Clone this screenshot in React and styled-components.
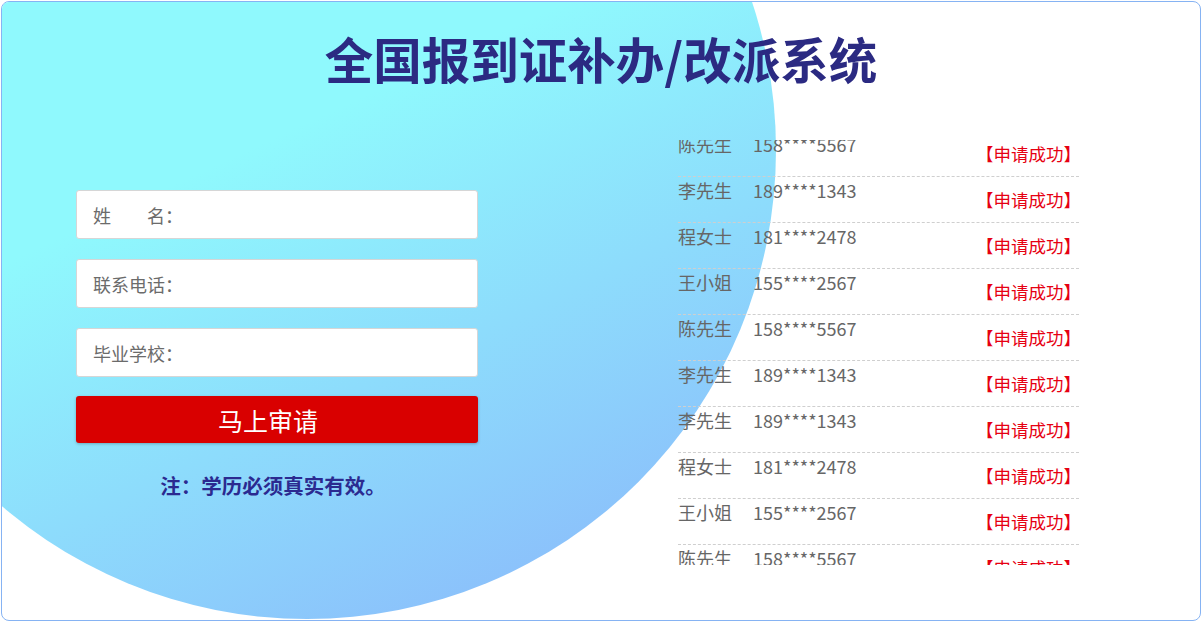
import React from "react";
import styled, { createGlobalStyle } from "styled-components";

const GlobalStyle = createGlobalStyle`
  html, body { margin: 0; padding: 0; background: #fff; }
  body { font-family: "Noto Sans CJK SC", "Noto Sans", sans-serif; }
  * { box-sizing: border-box; }
`;

const Page = styled.div`
  padding: 1px;
`;

const Panel = styled.div`
  position: relative;
  width: 1200px;
  height: 620px;
  border: 1px solid #86b3f3;
  border-radius: 8px;
  overflow: hidden;
  background: #fff;
`;

const Circle = styled.div`
  position: absolute;
  left: -164px;
  top: -321px;
  width: 938px;
  height: 938px;
  border-radius: 50%;
  background: linear-gradient(155deg, #8ff9fd 48%, #8bbffb 90%);
  z-index: 0;
`;

const Content = styled.div`
  position: relative;
  z-index: 1;
`;

const Title = styled.h1`
  margin: 0;
  padding-top: 24px;
  height: 88px;
  text-align: center;
  font-size: 48.5px;
  line-height: 64px;
  font-weight: 700;
  color: #2b2a82;
`;

const Body = styled.div`
  display: flex;
  align-items: flex-start;
`;

const FormColumn = styled.form`
  width: 402px;
  margin-left: 74px;
  margin-top: 100px;
  display: flex;
  flex-direction: column;
  gap: 20px;
`;

const Field = styled.input`
  width: 100%;
  height: 49px;
  border: 1px solid #d6d6d6;
  border-radius: 3px;
  padding: 0 16px;
  background: #fff;
  font-family: inherit;
  font-size: 18px;
  color: #333;
  outline: none;
  &::placeholder { color: #6b6b6b; }
`;

const SubmitButton = styled.button`
  width: 100%;
  height: 47px;
  margin-top: -1px;
  border: none;
  border-radius: 3px;
  background: #d90000;
  color: #fff;
  font-family: inherit;
  font-size: 25px;
  padding: 0 18px 0 0;
  box-shadow: 0 1px 3px rgba(0, 0, 0, 0.25);
  cursor: pointer;
`;

const Note = styled.p`
  margin: 8px 0 0;
  text-align: center;
  font-size: 20.5px;
  line-height: 28px;
  font-weight: 700;
  color: #2b2a90;
  padding-right: 8px;
`;

const ListColumn = styled.div`
  width: 401px;
  margin-left: 200px;
  margin-top: 50px;
  height: 425px;
  overflow: hidden;
`;

const ListTrack = styled.ul`
  list-style: none;
  margin: ${(p) => -p.$offset}px 0 0;
  padding: 0;
`;

const Row = styled.li`
  display: flex;
  align-items: flex-start;
  height: 46px;
  padding-top: 1px;
  border-bottom: 1px dashed #cfcfcf;
`;

const Name = styled.span`
  font-size: 18px;
  line-height: 24px;
  color: #666;
`;

const Phone = styled.span`
  margin-left: 21px;
  font-size: 18px;
  line-height: 24px;
  color: #666;
`;

const Status = styled.span`
  margin-left: auto;
  margin-right: -2px;
  margin-top: 10px;
  font-size: 17.5px;
  line-height: 24px;
  color: #e60012;
  text-spacing-trim: space-all;
  font-feature-settings: "fwid" 1;
`;

const rows = [
  ["陈先生", "158****5567"],
  ["李先生", "189****1343"],
  ["程女士", "181****2478"],
  ["王小姐", "155****2567"],
  ["陈先生", "158****5567"],
  ["李先生", "189****1343"],
  ["李先生", "189****1343"],
  ["程女士", "181****2478"],
  ["王小姐", "155****2567"],
  ["陈先生", "158****5567"],
];

export default function App() {
  return (
    <>
      <GlobalStyle />
      <Page>
        <Panel>
          <Circle />
          <Content>
            <Title>全国报到证补办/改派系统</Title>
            <Body>
              <FormColumn onSubmit={(e) => e.preventDefault()}>
                <Field placeholder="姓　　名：" />
                <Field placeholder="联系电话：" />
                <Field placeholder="毕业学校：" />
                <SubmitButton type="submit">马上审请</SubmitButton>
                <Note>注：学历必须真实有效。</Note>
              </FormColumn>
              <ListColumn>
                <ListTrack $offset={9}>
                  {rows.map(([n, p], i) => (
                    <Row key={i}>
                      <Name>{n}</Name>
                      <Phone>{p}</Phone>
                      <Status>【申请成功】</Status>
                    </Row>
                  ))}
                </ListTrack>
              </ListColumn>
            </Body>
          </Content>
        </Panel>
      </Page>
    </>
  );
}
